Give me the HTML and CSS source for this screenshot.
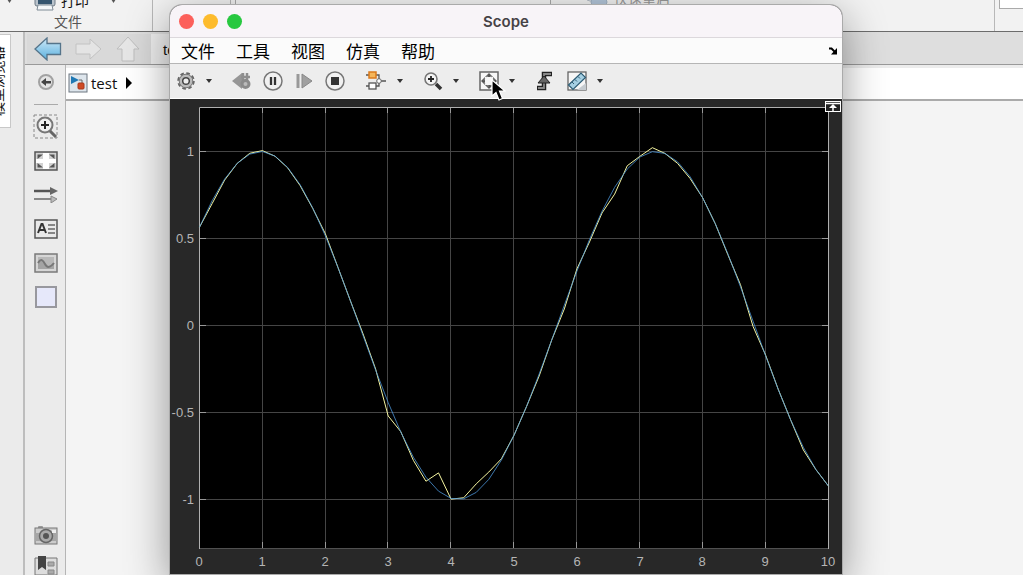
FILE: index.html
```html
<!DOCTYPE html>
<html lang="zh-CN">
<head>
<meta charset="utf-8">
<title>Scope</title>
<link rel="stylesheet" href="styles.css">
</head>
<body>
<div class="app">
  <header class="ribbon">
    <section class="group group-file">
      <div class="ribbon-row">
        <span class="caret"></span>
        <button class="ribbon-btn">
          <svg width="22" height="20" viewBox="0 0 22 20"><path d="M5 0h12v8H5z" fill="#fff" stroke="#8a98a5"/><rect x="1" y="6" width="20" height="9" rx="2" fill="#b9c3cc" stroke="#6f7b86"/><rect x="4" y="8" width="14" height="5" fill="#35556f"/><path d="M4 14h14l1 5H3z" fill="#f5f8fa" stroke="#7f8b96"/></svg>
          打印
        </button>
        <span class="caret"></span>
      </div>
      <div class="group-name">文件</div>
    </section>
    <section class="group group-lib"></section>
    <section class="group group-sim">
      <div class="gallery"></div>
      <button class="ribbon-btn restart">
        <svg width="26" height="18" viewBox="0 0 26 18"><rect x="1" y="2" width="22" height="9" rx="4" fill="#dde3ea" stroke="#b4bcc6"/><ellipse cx="14" cy="12" rx="8" ry="5" fill="#b3c5d9" stroke="#9fb0c2"/></svg>
        快速重启
      </button>
    </section>
    <section class="group group-end"><div class="result-box"></div></section>
  </header>

  <div class="workspace">
    <aside class="dock"><button class="dock-tab"><span>模型浏览器</span></button></aside>
    <main class="editor">
      <div class="tabs">
        <nav class="history">
          <button aria-label="后退"><svg width="28" height="24" viewBox="0 0 28 24"><defs><linearGradient id="nav" x2="0" y2="1"><stop offset="0" stop-color="#cfe9f8"/><stop offset="1" stop-color="#59b0de"/></linearGradient></defs><path d="M1 12 13 1v5.500h13.500v11H13V23z" fill="url(#nav)" stroke="#55748a" stroke-width="1.300"/></svg></button>
          <button aria-label="前进"><svg width="28" height="24" viewBox="0 0 28 24"><path d="M26 12 15 2v5H1v10h14v5z" fill="#e4e4e4" stroke="#c2c2c2"/></svg></button>
          <button aria-label="上一级"><svg width="24" height="26" viewBox="0 0 24 26"><path d="M12 1 1 13h5v12h12V13h5z" fill="#e6e6e6" stroke="#bdbdbd"/></svg></button>
        </nav>
        <button class="tab">test</button>
      </div>
      <div class="canvas-area">
        <div class="palette">
          <button aria-label="隐藏浏览器"><svg width="18" height="18" viewBox="0 0 18 18"><circle cx="9" cy="9" r="7" fill="#e4e4e4" stroke="#a2a2a2" stroke-width="2"/><path d="M4 9 9 5v3h5v2.500H9V13z" fill="#444"/></svg></button>
          <hr>
          <button aria-label="缩放"><svg width="26" height="26" viewBox="0 0 26 26"><rect x="1" y="1" width="23" height="23" fill="none" stroke="#888" stroke-dasharray="3 2"/><circle cx="12" cy="11" r="7.500" fill="#eee" stroke="#777" stroke-width="2"/><path d="M8 11h8M12 7v8" stroke="#222" stroke-width="2"/><path d="m17 17 6 6" stroke="#666" stroke-width="3"/></svg></button>
          <button aria-label="适应视图"><svg width="24" height="20" viewBox="0 0 24 20"><rect x="1" y="1" width="22" height="18" fill="#d2d2d2" stroke="#555" stroke-width="1.500"/><path d="M9 2h6v16H9zM2 8h20v4H2z" fill="#fff"/><path d="M3.500 3.500H9L3.500 8zM20.500 3.500H15L20.500 8zM3.500 16.500H9L3.500 12zM20.500 16.500H15l5.500-4.500z" fill="#555"/></svg></button>
          <button aria-label="信号"><svg width="26" height="16" viewBox="0 0 26 16"><path d="M1 4h18" stroke="#555" stroke-width="2.500"/><path d="m17 0 8 4-8 4z" fill="#666"/><path d="M1 12h18" stroke="#888" stroke-width="2"/><path d="m18 9 6 3-6 4z" fill="#bbb" stroke="#888"/></svg></button>
          <button aria-label="注释"><svg width="24" height="20" viewBox="0 0 24 20"><rect x="1" y="1" width="22" height="18" fill="#e9e9e9" stroke="#555" stroke-width="1.500"/><path d="m4 14 3.500-9h1L12 14M5.500 11h5" fill="none" stroke="#333" stroke-width="2"/><path d="M14 6h7M14 10h7M14 14h7" stroke="#666" stroke-width="1.500"/></svg></button>
          <button aria-label="图像"><svg width="24" height="20" viewBox="0 0 24 20"><rect x="1" y="1" width="22" height="18" fill="#d6d6d6" stroke="#7a7a7a" stroke-width="1.500"/><rect x="4" y="4" width="16" height="12" fill="#b8b8b8"/><path d="M4 10c3-5 5-3 7 1s5 4 9-1v6H4z" fill="#a4a4a4"/><path d="M4 10c3-5 5-3 7 1s5 4 9-1" fill="none" stroke="#777" stroke-width="2"/></svg></button>
          <button aria-label="区域"><svg width="22" height="22" viewBox="0 0 22 22"><rect x="1" y="1" width="20" height="20" fill="#e6e8fa" stroke="#98989e" stroke-width="2"/></svg></button>
          <div class="palette-end">
            <button aria-label="截图"><svg width="24" height="20" viewBox="0 0 24 20"><rect x="4" y="0" width="5" height="4" rx="1" fill="#999"/><rect x="1" y="2" width="22" height="16" fill="#ccc" stroke="#777"/><path d="M1 7h22v8H1z" fill="#a6a6a6"/><circle cx="12" cy="10" r="6.500" fill="#aaa" stroke="#666" stroke-width="1.500"/><circle cx="12" cy="10" r="3" fill="#555"/><path d="M18 4h4v3h-4z" fill="#eee"/></svg></button>
            <button aria-label="报告"><svg width="24" height="20" viewBox="0 0 24 20"><path d="M1 3h22v17H1z" fill="#ddd" stroke="#777"/><path d="M4 1h8v14l-4-3-4 3z" fill="#444"/><path d="M14 7h6v4h-6zM14 15h6v4h-6z" fill="#aaa" stroke="#888"/></svg></button>
          </div>
        </div>
        <div class="model">
          <div class="breadcrumb">
            <svg width="20" height="20" viewBox="0 0 20 20"><rect x="1" y="1" width="18" height="18" fill="#dde5ec" stroke="#6d7680"/><path d="m3 3 8 4-8 4z" fill="#1f78b4"/><path d="M11 7h3v4" fill="none" stroke="#666"/><rect x="10" y="10" width="6" height="6" rx="1" fill="#cf4a25" stroke="#a93618"/></svg>
            <a href="#">test</a>
            <svg width="8" height="12" viewBox="0 0 8 12"><path d="m1 0 6 6-6 6z"/></svg>
          </div>
          <div class="diagram"></div>
        </div>
      </div>
    </main>
  </div>

  <section class="scope" aria-label="Scope">
    <header class="titlebar">
      <div class="lights">
        <button class="light red" aria-label="关闭"></button>
        <button class="light amber" aria-label="最小化"></button>
        <button class="light green" aria-label="缩放窗口"></button>
      </div>
      <h1>Scope</h1>
    </header>
    <nav class="menubar">
      <button>文件</button><button>工具</button><button>视图</button><button>仿真</button><button>帮助</button>
      <button class="undock" aria-label="停靠"><svg width="10" height="8" viewBox="0 0 10 8"><path d="M1 1.500h2.500L7 5" fill="none" stroke="#000" stroke-width="2"/><path d="M9 1v6.500H3z"/></svg></button>
    </nav>
    <div class="toolbar">
      <div class="tool with-menu">
        <button aria-label="配置"><svg width="20" height="20" viewBox="0 0 20 20"><circle cx="10" cy="10" r="7.500" fill="none" stroke="#666" stroke-width="2.500" stroke-dasharray="3.500 2.400"/><circle cx="10" cy="10" r="5.500" fill="none" stroke="#bbb" stroke-width="3"/><circle cx="10" cy="10" r="6.800" fill="none" stroke="#777"/><circle cx="10" cy="10" r="3.300" fill="#eee" stroke="#444" stroke-width="1.500"/></svg></button>
        <button class="drop" aria-label="配置菜单"></button>
      </div>
      <div class="tool playback">
        <button aria-label="步退"><svg width="20" height="20" viewBox="0 0 20 20"><path d="M0 10 10 2v16z" fill="#969696"/><path d="M11 2v9M15 2v7M9 6h9" stroke="#8e8e8e" stroke-width="2.500"/><circle cx="13.500" cy="13" r="3.500" fill="#bbb" stroke="#8a8a8a" stroke-width="3"/></svg></button>
        <button aria-label="暂停"><svg width="20" height="20" viewBox="0 0 20 20"><circle cx="10" cy="10" r="9" fill="#f1f1f1" stroke="#777" stroke-width="1.500"/><path d="M8 6v8M12 6v8" stroke="#333" stroke-width="2.300"/></svg></button>
        <button aria-label="步进"><svg width="20" height="20" viewBox="0 0 20 20"><path d="M4 3v14" stroke="#999" stroke-width="3"/><path d="m8 3 10 7-10 7z" fill="#a0a0a0" stroke="#888"/></svg></button>
        <button aria-label="停止"><svg width="20" height="20" viewBox="0 0 20 20"><circle cx="10" cy="10" r="9" fill="#f1f1f1" stroke="#777" stroke-width="1.500"/><rect x="6" y="6" width="8" height="8" fill="#333"/></svg></button>
      </div>
      <div class="tool with-menu">
        <button aria-label="信号选择"><svg width="22" height="20" viewBox="0 0 22 20"><path d="M1 4h13v5M1 15h13v-4M16 10h5" fill="none" stroke="#555" stroke-width="1.300"/><rect x="4" y="1" width="7" height="6" fill="#f5b65a" stroke="#d9791c" stroke-width="1.500"/><rect x="4" y="12" width="7" height="6" fill="#fff" stroke="#555" stroke-width="1.300"/><circle cx="14" cy="10" r="2.300" fill="#fff" stroke="#666"/></svg></button>
        <button class="drop" aria-label="信号菜单"></button>
      </div>
      <div class="tool with-menu">
        <button aria-label="放大"><svg width="20" height="20" viewBox="0 0 20 20"><circle cx="8" cy="8" r="6" fill="#f4f4f4" stroke="#777" stroke-width="1.600"/><path d="M5 8h6M8 5v6" stroke="#222" stroke-width="1.800"/><path d="m13 13 5 5" stroke="#333" stroke-width="3.500"/></svg></button>
        <button class="drop" aria-label="缩放菜单"></button>
      </div>
      <div class="tool with-menu fit">
        <button aria-label="缩放坐标区"><svg width="20" height="20" viewBox="0 0 20 20"><rect x="1" y="1" width="18" height="18" fill="#f7f7f7" stroke="#666" stroke-width="1.500"/><path d="m10 2 4 4H6zM10 18l-4-4h8zM2 10l4-4v8zM18 10l-4 4V6z" fill="#555"/><circle cx="10" cy="10" r="5" fill="none" stroke="#999" stroke-dasharray="2 2"/></svg></button>
        <button class="drop" aria-label="坐标区菜单"></button>
        <svg class="pointer" width="15" height="22" viewBox="0 0 15 22"><path d="M1 1v16l4-3.500 3 7.500 3.500-1.500L8.500 12H14z" stroke="#fff" stroke-width="1.200"/></svg>
      </div>
      <div class="tool trigger">
        <button aria-label="触发"><svg width="20" height="20" viewBox="0 0 20 20"><path d="M2 17h7V3h8" fill="none" stroke="#222" stroke-width="4.500"/><path d="M3 17h6V3h7" fill="none" stroke="#888" stroke-width="1.800"/><path d="m9 5 6 7H3z" fill="#666" stroke="#222"/></svg></button>
      </div>
      <div class="tool with-menu measure">
        <button aria-label="测量"><svg width="20" height="20" viewBox="0 0 20 20"><rect x="1" y="1" width="18" height="18" fill="#f6f6f6" stroke="#666" stroke-width="1.300"/><path d="M19 12v7h-9z" fill="#c5cbd0"/><path d="M1.500 14 14 2l4.500 4.500L6 18.500z" fill="#a5cfe2" stroke="#2d5c74" stroke-width="1.200"/><path d="m5 11 2 2M8 8.500l2 2M11 5.500l2 2" stroke="#2d5c74"/></svg></button>
        <button class="drop" aria-label="测量菜单"></button>
      </div>
    </div>
    <div class="display">
      <svg class="plot" viewBox="0 0 672 475" role="img" aria-label="0 到 10 的信号波形">
        <rect x="29" y="8" width="630" height="442" fill="#000"/>
        <g class="grid">
          <path d="M92.500 9v440M155.500 9v440M217.500 9v440M280.500 9v440M343.500 9v440M406.500 9v440M469.500 9v440M532.500 9v440M595.500 9v440"/>
          <path d="M30 52.500h628M30 139.500h628M30 226.500h628M30 313.500h628M30 400.500h628"/>
        </g>
        <path class="ticks" d="M92.500 9v5M155.500 9v5M217.500 9v5M280.500 9v5M343.500 9v5M406.500 9v5M469.500 9v5M532.500 9v5M595.500 9v5M92.500 449v-6M155.500 449v-6M217.500 449v-6M280.500 449v-6M343.500 449v-6M406.500 449v-6M469.500 449v-6M532.500 449v-6M595.500 449v-6M30 52.500h6M30 139.500h6M30 226.500h6M30 313.500h6M30 400.500h6M658 52.500h-6M658 139.500h-6M658 226.500h-6M658 313.500h-6M658 400.500h-6"/>
        <path class="frame-soft" d="M29 449.500h630"/>
        <path class="frame" d="M29.500 450V8.500h629V450"/>
        <g transform="translate(29.500 226.500) scale(12.580 -174)">
          <polyline class="signal measured" points="0,.565 1,.700 2,.836 3,.932 4,.990 5,1.005 6,.973 7,.907 8,.804 9,.673 10,.528 11,.335 12,.141 13,-.048 14,-.250 15,-.520 16,-.610 17,-.775 18,-.895 19,-.847 20,-.998 21,-.990 22,-.910 23,-.842 24,-.766 25,-.631 26,-.465 27,-.290 28,-.083 29,.095 30,.325 31,.480 32,.647 33,.755 34,.918 35,.972 36,1.022 37,.989 38,.932 39,.845 40,.734 41,.585 42,.407 43,.235 44,-.005 45,-.170 46,-.366 47,-.544 48,-.715 49,-.828 50,-.923"/>
          <polyline class="signal reference" points="0,.565 1,.717 2,.842 3,.932 4,.985 5,1 6,.974 7,.909 8,.809 9,.676 10,.516 11,.335 12,.141 13,-.058 14,-.256 15,-.443 16,-.612 17,-.757 18,-.872 19,-.952 20,-.994 21,-.996 22,-.959 23,-.884 24,-.773 25,-.631 26,-.465 27,-.279 28,-.083 29,.117 30,.312 31,.494 32,.657 33,.794 34,.899 35,.968 36,.999 37,.989 38,.941 39,.855 40,.734 41,.585 42,.412 43,.223 44,.025 45,-.174 46,-.367 47,-.544 48,-.700 49,-.828 50,-.923"/>
        </g>
        <g class="labels y-labels"><text x="24" y="57">1</text><text x="24" y="144">0.5</text><text x="24" y="231">0</text><text x="24" y="318">-0.5</text><text x="24" y="405">-1</text></g>
        <g class="labels x-labels"><text x="29" y="467">0</text><text x="92" y="467">1</text><text x="155" y="467">2</text><text x="218" y="467">3</text><text x="281" y="467">4</text><text x="344" y="467">5</text><text x="407" y="467">6</text><text x="470" y="467">7</text><text x="532" y="467">8</text><text x="595" y="467">9</text><text x="658" y="467">10</text></g>
        <g><rect x="655.500" y="2.500" width="15" height="10" fill="#222" stroke="#fff"/><path d="M656 4.500h14M663 12V7" stroke="#fff" stroke-width="1.500"/><path d="m663 5 4 4h-8z" fill="#fff"/></g>
      </svg>
    </div>
  </section>
</div>
</body>
</html>
```
FILE: styles.css
```css
* { box-sizing: border-box; }
body {
  margin: 0;
  font-family: "Liberation Sans", "Noto Sans CJK SC", sans-serif;
  color: #111;
}
button {
  border: 0;
  padding: 0;
  background: none;
  font: inherit;
  color: inherit;
}
svg { display: block; flex: none; }

.app {
  position: relative;
  display: flex;
  flex-direction: column;
  height: 100vh;
  overflow: hidden;
  background: #ebebeb;
}

/* Ribbon */
.ribbon {
  display: flex;
  flex: none;
  height: 32px;
  overflow: hidden;
  background: #f2f2f2;
  border-bottom: 1px solid #6c6c6c;
}
.group { border-right: 1px solid #b8b8b8; }
.group-file {
  width: 153px;
  display: flex;
  flex-direction: column;
  justify-content: flex-end;
}
.ribbon-row {
  display: flex;
  align-items: center;
  gap: 22px;
  padding-left: 7px;
}
.ribbon-btn {
  display: flex;
  align-items: center;
  gap: 5px;
  font-size: 14px;
  line-height: 24px;
  white-space: nowrap;
}
.caret {
  width: 5px;
  height: 4px;
  background: #555;
  clip-path: polygon(0 0, 100% 0, 50% 100%);
}
.group-name {
  padding-right: 16px;
  text-align: center;
  font-size: 14px;
  line-height: 18px;
  color: #555;
}
.group-lib { width: 78px; }
.group-sim {
  flex: 1;
  display: flex;
  align-items: flex-start;
  gap: 34px;
  padding-left: 4px;
}
.gallery {
  width: 316px;
  height: 32px;
  border: 1px solid #aaa;
  border-width: 0 1px;
  background: #f5f5f5;
}
.restart { margin-top: -13px; gap: 3px; color: #999; }
.group-end { width: 28px; padding-left: 4px; border-right: 0; }
.result-box {
  height: 9px;
  background: #fff;
  border: 1px solid #aaa;
  border-width: 0 0 1px 1px;
}

/* Model editor */
.workspace { display: flex; flex: 1; min-height: 0; }
.dock {
  width: 25px;
  padding-top: 2px;
  border-right: 2px solid #bdbdbd;
}
.dock-tab {
  display: flex;
  align-items: center;
  justify-content: flex-end;
  width: 11px;
  height: 94px;
  padding-right: 4px;
  overflow: hidden;
  background: #fff;
  border: 1px solid #c8c8c8;
  border-left: 0;
}
.dock-tab span {
  writing-mode: sideways-lr;
  font-size: 14px;
  line-height: 16px;
  white-space: nowrap;
}
.editor { display: flex; flex: 1; flex-direction: column; min-width: 0; }
.tabs {
  display: flex;
  flex: none;
  height: 33px;
  padding: 2px 0 0 2px;
  background: #dedede;
  border-bottom: 1px solid #999;
}
.history {
  display: flex;
  align-items: center;
  gap: 13px;
  width: 124px;
  padding-left: 7px;
  background: #d9d9d9;
}
.tab {
  width: 140px;
  padding-left: 12px;
  text-align: left;
  font-size: 15px;
  background: #eee;
}
.canvas-area { display: flex; flex: 1; min-height: 0; }
.palette {
  display: flex;
  flex-direction: column;
  align-items: center;
  gap: 14px;
  width: 41px;
  padding: 7px 0 0 2px;
  border-right: 1px solid #b5b5b5;
}
.palette button {
  display: flex;
  align-items: center;
  height: 20px;
}
.palette hr {
  width: 24px;
  margin: -2px 0;
  border: 0;
  border-top: 1px solid #aaa;
}
.palette-end {
  display: flex;
  flex-direction: column;
  gap: 9px;
  margin-top: auto;
}
.model { display: flex; flex: 1; flex-direction: column; }
.breadcrumb {
  display: flex;
  align-items: center;
  gap: 3px;
  height: 36px;
  padding: 0 2px 2px;
  background: #fff;
  border-top: 3px solid #ececec;
  border-bottom: 2px solid #aaa;
}
.breadcrumb a {
  padding-right: 5px;
  font: 15px "Open Sans", sans-serif;
  color: #111;
  text-decoration: none;
}
.diagram { flex: 1; background: #f4f4f4; }

/* Floating scope window */
.scope {
  position: absolute;
  inset: 5px 181px 1px 170px;
  display: flex;
  flex-direction: column;
  overflow: hidden;
  border-radius: 12px 12px 0 0;
  background: #282828;
  box-shadow: 0 0 0 1px #aaa, 0 12px 44px rgba(0, 0, 0, .42);
}
.titlebar {
  display: grid;
  grid-template-columns: 1fr auto 1fr;
  align-items: center;
  flex: none;
  height: 33px;
  padding: 0 9px;
  background: #f8f4f8;
  border-bottom: 1px solid #dcd8dc;
}
.titlebar h1 {
  margin: 0;
  font: 600 15px Inter, sans-serif;
  color: #464246;
}
.lights { display: flex; gap: 9px; }
.light { width: 15px; height: 15px; border-radius: 50%; }
.red { background: #fc605b; }
.amber { background: #fdbb2d; }
.green { background: #28c840; }
.menubar {
  display: flex;
  align-items: center;
  flex: none;
  gap: 21px;
  height: 26px;
  padding: 0 4px 0 11px;
  font-family: "Noto Sans CJK SC", sans-serif;
  font-size: 17px;
  line-height: 24px;
  color: #000;
  background: #fbfbfb;
  border-bottom: 1px solid #b5b5b5;
}
.undock { margin-left: auto; }
.toolbar {
  display: flex;
  align-items: center;
  flex: none;
  height: 35px;
  padding-left: 6px;
  background: #ededed;
  border-bottom: 1px solid #fff;
}
.tool { display: flex; align-items: center; margin-right: 20px; }
.with-menu { gap: 10px; }
.drop {
  width: 6px;
  height: 4px;
  background: #333;
  clip-path: polygon(0 0, 100% 0, 50% 100%);
}
.playback { gap: 11px; }
.fit { position: relative; }
.trigger { margin-right: 12px; }
.pointer { position: absolute; left: 12px; top: 8px; }
.display { flex: 1; min-height: 0; background: #282828; }

/* Plot */
.plot { width: 100%; height: 100%; }
.grid { fill: none; stroke: #454545; }
.ticks { fill: none; stroke: #999; }
.frame { fill: none; stroke: #b0b0b0; }
.frame-soft { fill: none; stroke: #505050; }
.signal { fill: none; stroke-width: 1px; vector-effect: non-scaling-stroke; }
.measured { stroke: #f5f5a0; }
.reference { stroke: #4b93d6; stroke-opacity: .8; }
.labels { fill: #b5b5b5; font-size: 13px; }
.y-labels { text-anchor: end; }
.x-labels { text-anchor: middle; }
```
